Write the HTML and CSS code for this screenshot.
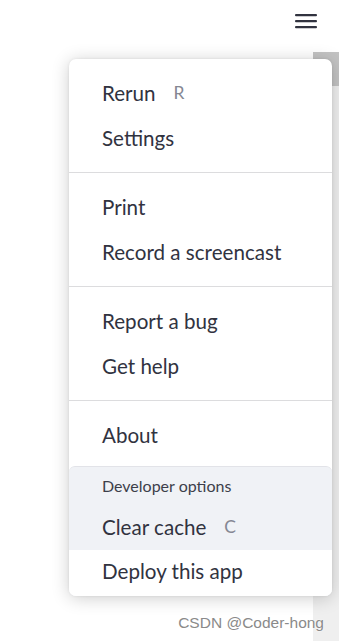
FILE: index.html
```html
<!DOCTYPE html>
<html>
<head>
<meta charset="utf-8">
<link rel="stylesheet" href="styles.css">
</head>
<body>
<header class="toolbar">
  <button class="burger" aria-label="Main menu">
    <svg width="22" height="16" viewBox="0 0 22 16"><rect x="0" y="1" width="22" height="2.2" rx="1" fill="#31333f"/><rect x="0" y="7" width="22" height="2.2" rx="1" fill="#31333f"/><rect x="0" y="13" width="22" height="2.2" rx="1" fill="#31333f"/></svg>
  </button>
</header>
<div class="scrollbar"><div class="thumb"></div></div>
<nav class="menu">
  <ul class="section">
    <li class="item">Rerun <span class="key">R</span></li>
    <li class="item">Settings</li>
  </ul>
  <ul class="section">
    <li class="item">Print</li>
    <li class="item">Record a screencast</li>
  </ul>
  <ul class="section">
    <li class="item">Report a bug</li>
    <li class="item">Get help</li>
  </ul>
  <ul class="section last">
    <li class="item">About</li>
  </ul>
  <div class="dev">
    <div class="dev-label">Developer options</div>
    <div class="item hover">Clear cache <span class="key">C</span></div>
    <div class="item white">Deploy this app</div>
  </div>
</nav>
<div class="watermark">CSDN @Coder-hong</div>
</body>
</html>
```
FILE: styles.css
```css
html, body {
  margin: 0;
  padding: 0;
}
body {
  width: 339px;
  height: 641px;
  position: relative;
  overflow: hidden;
  background: #ffffff;
  font-family: Lato, "Noto Sans", sans-serif;
  color: #31333f;
}
.toolbar {
  display: flex;
  justify-content: flex-end;
  padding: 13px 22px 0 0;
  height: 30px;
}
.burger {
  border: 0;
  background: none;
  padding: 0;
  width: 22px;
  height: 16px;
  display: block;
}
.burger svg { display: block; }
.scrollbar {
  position: absolute;
  right: 0;
  top: 52px;
  bottom: 0;
  width: 26px;
  background: #efefef;
}
.thumb {
  height: 34px;
  background: #c3c3c3;
}
.menu {
  position: absolute;
  left: 69px;
  top: 59px;
  width: 263px;
  height: 537px;
  background: #ffffff;
  border-radius: 7px;
  box-shadow: 0 2px 18px rgba(0, 0, 0, 0.2), 0 0 3px rgba(0, 0, 0, 0.08);
  overflow: hidden;
}
.section {
  list-style: none;
  margin: 0;
  padding: 13px 0 10px;
  border-bottom: 1px solid #dcdcde;
}
.section.last {
  border-bottom: 0;
  padding-bottom: 7px;
}
.item {
  height: 45px;
  box-sizing: border-box;
  display: flex;
  align-items: center;
  padding: 0 0 4px 33px;
  font-size: 20.6px;
  color: #31333f;
}
.key {
  color: #858793;
  font-size: 17.5px;
  margin-left: 18px;
}
.dev {
  background: #f0f2f6;
  border-top: 1px solid #e2e3e8;
  border-radius: 6px 6px 0 0;
}
.dev-label {
  height: 40px;
  box-sizing: border-box;
  display: flex;
  align-items: center;
  padding: 0 0 4px 33px;
  font-size: 16px;
  color: #3d3f4a;
}
.item.hover {
  height: 43px;
}
.item.white {
  background: #ffffff;
  height: 46px;
}
.watermark {
  position: absolute;
  right: 15px;
  bottom: 9px;
  font-family: "Liberation Sans", Arial, sans-serif;
  font-size: 15.5px;
  color: #8a8a8a;
  text-shadow: 0 0 1px #ffffff, 0 0 2px #ffffff;
}
```
